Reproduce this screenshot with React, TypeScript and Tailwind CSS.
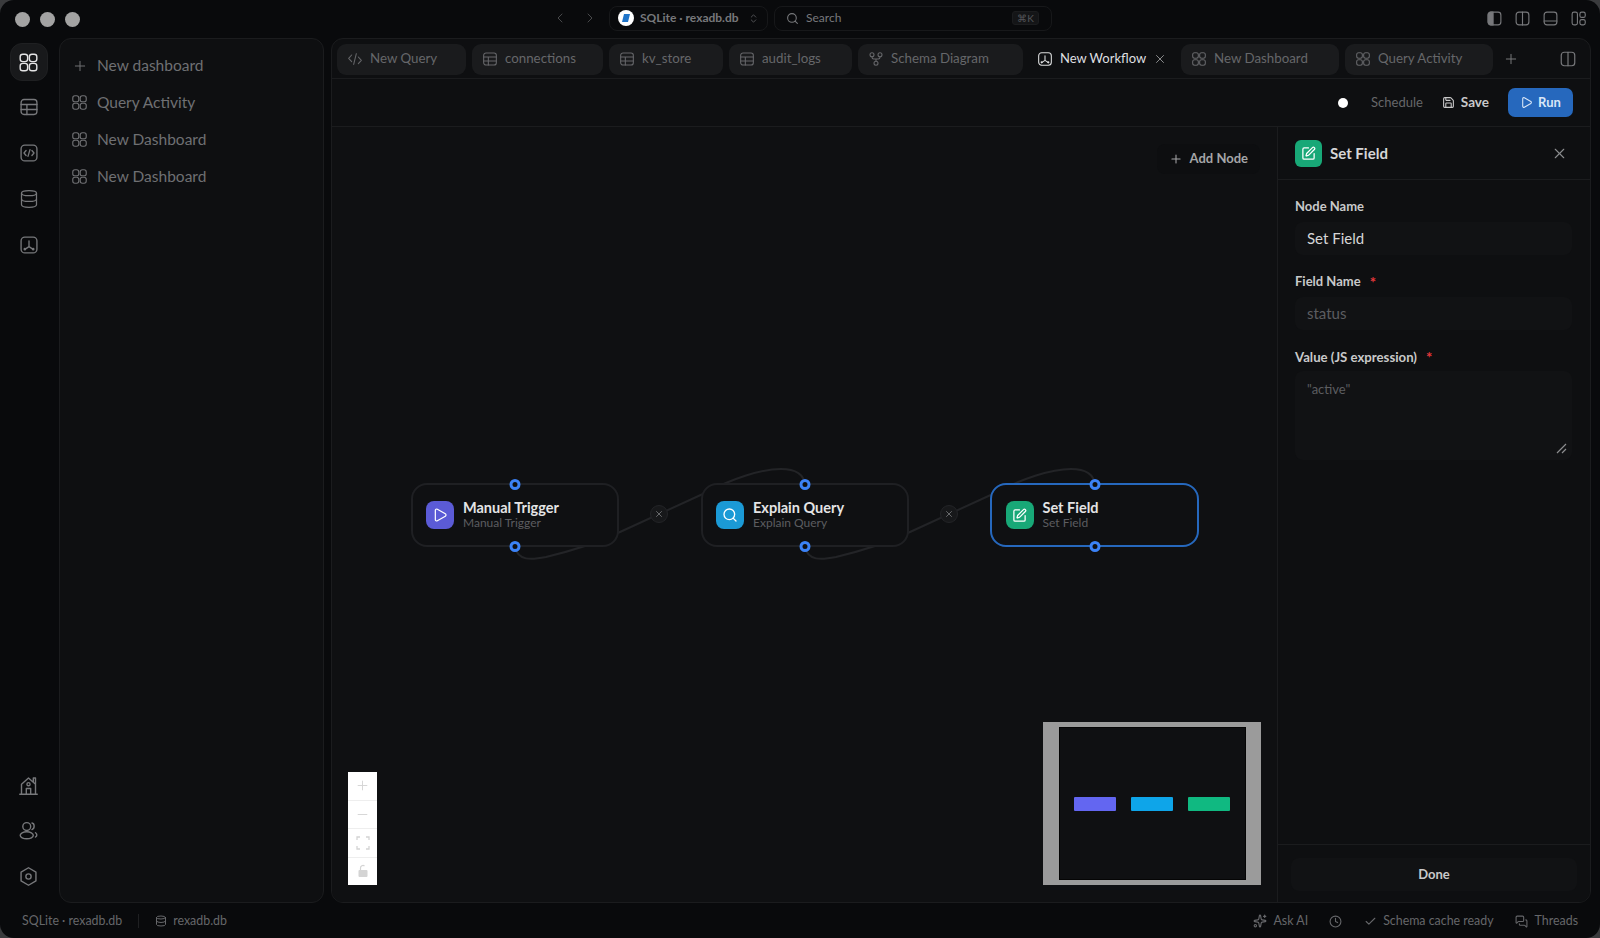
import React from "react";
import { Plus, X, ChevronLeft, ChevronRight, ChevronsUpDown, Search, Play, Save, SquarePen, Minus, Check, Clock, Database, Sparkles, MessagesSquare } from "lucide-react";

type P = { s?: number; c?: string };
const Svg = ({ s = 20, c = "", children }: P & { children: React.ReactNode }) => (
  <svg width={s} height={s} viewBox="0 0 24 24" fill="none" stroke="currentColor" strokeWidth={1.6} strokeLinecap="round" strokeLinejoin="round" className={c}>
    {children}
  </svg>
);
const GridI = (p: P) => (
  <Svg {...p}>
    <rect x="2.5" y="2.5" width="8.5" height="8.5" rx="3" />
    <rect x="13" y="2.5" width="8.5" height="8.5" rx="3" />
    <rect x="2.5" y="13" width="8.5" height="8.5" rx="3" />
    <rect x="13" y="13" width="8.5" height="8.5" rx="3" />
  </Svg>
);
const TableI = (p: P) => (
  <Svg {...p}>
    <rect x="2.5" y="3" width="19" height="18" rx="3.5" />
    <path d="M2.5 9h19M2.5 15h19M9.5 9v12" />
  </Svg>
);
const CodeBoxI = (p: P) => (
  <Svg {...p}>
    <rect x="2.5" y="2.5" width="19" height="19" rx="4.5" />
    <path d="M8.5 9 6 12l2.5 3M15.5 9 18 12l-2.5 3M13.2 8l-2.4 8" />
  </Svg>
);
const CodeI = (p: P) => (
  <Svg {...p}>
    <path d="M7 6 2.5 11 7 16M17 9l4.5 5-4.5 5M14 4l-4 16" />
  </Svg>
);
const FlowI = (p: P) => (
  <Svg {...p}>
    <rect x="2.5" y="2.5" width="19" height="19" rx="4.5" />
    <path d="M12 7v7M12 14l-4.5 3M12 14l4.5 3" />
    <circle cx="7" cy="17" r=".8" fill="currentColor" />
    <circle cx="17" cy="17" r=".8" fill="currentColor" />
  </Svg>
);
const SchemaI = (p: P) => (
  <Svg {...p}>
    <circle cx="6" cy="5.5" r="3" />
    <circle cx="18" cy="5.5" r="3" />
    <circle cx="12" cy="18.5" r="3" />
    <path d="M6 8.5v1c0 1.5 1 2.500 2.500 2.500h7c1.500 0 2.500-1 2.500-2.500v-1M12 12v3.500" />
  </Svg>
);
const HomeI = (p: P) => (
  <Svg {...p}>
    <path d="M2 22h20M4 22V10.500L12 3.500l8 7V22M17.500 8V3.500h2.500v6.500M9.500 22v-6.500h5V22" />
    <circle cx="12" cy="10.500" r="1.800" />
  </Svg>
);
const UsersI = (p: P) => (
  <Svg {...p}>
    <circle cx="10" cy="7.500" r="4.500" />
    <ellipse cx="10" cy="17.500" rx="7.500" ry="4" />
    <path d="M16 3.500c3 .5 3.500 6 0 7.500M20 14.500c2 1.500 2 3.500 0 5" />
  </Svg>
);
const GearI = (p: P) => (
  <Svg {...p}>
    <path d="M12 2 20.500 7v10L12 22l-8.500-5V7z" />
    <circle cx="12" cy="12" r="3" />
  </Svg>
);
const PanelI = ({ kind, s = 17 }: { kind: "left" | "mid" | "bottom"; s?: number }) => (
  <Svg s={s}>
    <rect x="3" y="3" width="18" height="18" rx="4" />
    {kind === "left" && <path d="M3 7a4 4 0 0 1 4-4h3v18H7a4 4 0 0 1-4-4z" fill="currentColor" />}
    {kind === "mid" && <path d="M12 3v18" />}
    {kind === "bottom" && <path d="M3 15.500h18" />}
  </Svg>
);
const DashI = ({ s = 17 }: P) => (
  <Svg s={s}>
    <rect x="3" y="3" width="7.500" height="18" rx="2.500" />
    <rect x="14" y="3" width="7.500" height="7.500" rx="2.500" />
    <rect x="14" y="13.500" width="7.500" height="7.500" rx="2.500" />
  </Svg>
);

const tabs: { n: string; I: (p: P) => React.ReactElement; w: string; active?: boolean }[] = [
  { n: "New Query", I: CodeI, w: "w-[129px]" },
  { n: "connections", I: TableI, w: "w-[131px]" },
  { n: "kv_store", I: TableI, w: "w-[114px]" },
  { n: "audit_logs", I: TableI, w: "w-[123px]" },
  { n: "Schema Diagram", I: SchemaI, w: "w-[165px]" },
  { n: "New Workflow", I: FlowI, w: "w-[146px]", active: true },
  { n: "New Dashboard", I: GridI, w: "w-[158px]" },
  { n: "Query Activity", I: GridI, w: "w-[148px]" },
];

const Handle = ({ pos }: { pos: string }) => (
  <span className={`absolute left-1/2 -translate-x-1/2 ${pos} w-[11px] h-[11px] rounded-full bg-[#0f1012] border-[3px] border-[#3b82f6]`} />
);

const Node = ({ title, tone, pos, selected, I }: { title: string; tone: string; pos: string; selected?: boolean; I: React.ReactNode }) => (
  <div className={`absolute top-[356px] h-[64px] rounded-[16px] bg-[#0f1012] flex items-center gap-[9px] ${pos} ${selected ? "pl-[13.500px] border-[2.500px] border-[#2668bd]" : "pl-[13px] border-2 border-[#1f2023]"}`}>
    <div className={`w-[28px] h-[28px] rounded-[8px] flex items-center justify-center text-white ${tone}`}>{I}</div>
    <div className="flex flex-col pb-[1px]">
      <span className="text-[14.500px] leading-[16px] font-bold text-[#e4e4e5]">{title}</span>
      <span className="text-[12px] leading-[13px] text-[#5c5d60]">{title}</span>
    </div>
    <Handle pos="-top-[6.500px]" />
    <Handle pos="-bottom-[6.500px]" />
  </div>
);

const EdgeX = ({ pos }: { pos: string }) => (
  <div className={`absolute top-[378px] ${pos} w-[18px] h-[18px] rounded-full bg-[#17181a] border border-[#232427] flex items-center justify-center text-[#77787b]`}>
    <X size={10} />
  </div>
);

const Field = ({ label, req, value, dim }: { label: string; req?: boolean; value: string; dim?: boolean }) => (
  <div className="flex flex-col">
    <div className="h-[20px] flex items-center gap-[9px] text-[13px] font-bold text-[#c9c9ca]">
      {label}
      {req && <span className="text-[#e5383b] text-[15px]">*</span>}
    </div>
    <div className={`mt-[5px] h-[33px] rounded-[8px] bg-[#111214] flex items-center px-[12px] text-[15px] ${dim ? "text-[#5c5d60]" : "text-[#d6d6d7]"}`}>{value}</div>
  </div>
);

export default function App() {
  return (
    <div className="w-[1600px] h-[938px] bg-[#3a3b3d] overflow-hidden" style={{ fontFamily: "Lato, 'Noto Sans', sans-serif" }}>
      <div className="h-full rounded-[14px] bg-[#090a0c] flex flex-col">
        {/* title bar */}
        <div className="h-[38px] shrink-0 flex items-center pb-[2px]">
          <div className="flex items-center gap-[10px] pl-[15px] pt-[2px]">
            <span className="w-[15px] h-[15px] rounded-full bg-[#a3a3a3]" />
            <span className="w-[15px] h-[15px] rounded-full bg-[#a3a3a3]" />
            <span className="w-[15px] h-[15px] rounded-full bg-[#a3a3a3]" />
          </div>
          <div className="ml-[472px] flex items-center gap-[14px] text-[#48494b]">
            <ChevronLeft size={16} strokeWidth={1.5} />
            <ChevronRight size={16} strokeWidth={1.5} />
          </div>
          <div className="ml-[11px] h-[25px] w-[159px] rounded-[8px] border border-[#17181a] flex items-center pl-[8px] gap-[6px] text-[12px] font-bold text-[#77787b]">
            <span className="w-[16px] h-[16px] rounded-full bg-white flex items-center justify-center shrink-0">
              <svg width="10" height="10" viewBox="0 0 10 10"><path d="M3 1h6L7 9H1z" fill="#1f74c9" /></svg>
            </span>
            SQLite · rexadb.db
            <ChevronsUpDown size={11} className="text-[#55565a] ml-[3px]" />
          </div>
          <div className="ml-[6px] h-[25px] w-[278px] rounded-[8px] border border-[#17181a] flex items-center pl-[11px] pr-[12px] gap-[7px] text-[12px] text-[#77787b]">
            <Search size={13} />
            Search
            <span className="ml-auto h-[14px] px-[4px] rounded-[3px] bg-[#141517] border border-[#1b1c1e] text-[10px] leading-[12px] text-[#55565a]">⌘K</span>
          </div>
          <div className="ml-auto mr-[13px] flex items-center gap-[11px] text-[#77787b]">
            <PanelI kind="left" />
            <PanelI kind="mid" />
            <PanelI kind="bottom" />
            <DashI />
          </div>
        </div>

        {/* body */}
        <div className="flex-1 min-h-0 flex">
          {/* rail */}
          <div className="w-[59px] shrink-0 flex flex-col items-center pt-[5px] pb-[8px] pr-[2px] text-[#77787b]">
            <div className="w-[38px] h-[38px] rounded-[12px] bg-[#18191b] border border-[#1f2022] flex items-center justify-center text-[#e4e4e5]"><GridI s={21} /></div>
            <div className="mt-[7px] h-[38px] flex items-center"><TableI s={20} /></div>
            <div className="mt-[8px] h-[38px] flex items-center"><CodeBoxI s={20} /></div>
            <div className="mt-[8px] h-[38px] flex items-center"><Database size={20} strokeWidth={1.5} /></div>
            <div className="mt-[8px] h-[38px] flex items-center"><FlowI s={20} /></div>
            <div className="mt-auto h-[38px] flex items-center"><HomeI s={21} /></div>
            <div className="mt-[7px] h-[38px] flex items-center"><UsersI s={21} /></div>
            <div className="mt-[8px] h-[38px] flex items-center"><GearI s={21} /></div>
          </div>

          {/* left panel */}
          <div className="w-[265px] shrink-0 rounded-[12px] border border-[#1b1c1e] bg-[#0e0f11] pt-[8px] pl-[11px] pr-[12px] text-[15.500px] text-[#6f7073]">
            <div className="h-[37px] flex items-center gap-[9px]"><Plus size={16} strokeWidth={1.5} className="mx-[0.500px]" /><span>New dashboard</span></div>
            <div className="h-[37px] flex items-center gap-[9px]"><GridI s={17} /><span>Query Activity</span></div>
            <div className="h-[37px] flex items-center gap-[9px]"><GridI s={17} /><span>New Dashboard</span></div>
            <div className="h-[37px] flex items-center gap-[9px]"><GridI s={17} /><span>New Dashboard</span></div>
          </div>

          {/* main panel */}
          <div className="ml-[7px] mr-[9px] flex-1 min-w-0 rounded-[12px] border border-[#1b1c1e] bg-[#0e0f11] flex flex-col overflow-hidden">
            <div className="h-[40px] shrink-0 border-b border-[#1b1c1e] flex items-center pl-[5px] gap-[6px] pt-[1px]">
              {tabs.map((t) => (
                <div key={t.n} className={`${t.w} h-[31px] shrink-0 rounded-[9px] flex items-center gap-[7px] whitespace-nowrap ${t.active ? "pl-[8px] text-[13px] text-[#dedfe0]" : "pl-[10px] text-[13.300px] bg-[#1a1b1d] text-[#66676a]"}`}>
                  <t.I s={16} c="shrink-0" />
                  <span>{t.n}</span>
                  {t.active && <X size={14} strokeWidth={1.5} className="ml-auto mr-[9px] shrink-0 text-[#9a9b9d]" />}
                </div>
              ))}
              <Plus size={16} strokeWidth={1.5} className="ml-[4px] text-[#77787b]" />
              <span className="ml-[34px] text-[#77787b]"><PanelI kind="mid" s={18} /></span>
            </div>
            <div className="h-[48px] shrink-0 border-b border-[#1b1c1e] flex items-center pr-[17px]">
              <span className="ml-auto w-[10px] h-[10px] rounded-full bg-white" />
              <span className="ml-[23px] text-[13px] text-[#66676a]">Schedule</span>
              <div className="ml-[19px] flex items-center gap-[6px] text-[13.500px] font-bold text-[#c9c9ca]"><Save size={13} />Save</div>
              <div className="ml-[19px] w-[65px] h-[29px] rounded-[7px] bg-[#2668bd] flex items-center justify-center gap-[5px] text-[13px] font-bold text-[#d8e6f7]"><Play size={13} />Run</div>
            </div>
            <div className="flex-1 min-h-0 flex">
              {/* canvas */}
              <div className="flex-1 min-w-0 relative bg-[#0f1012]">
                <svg className="absolute inset-0" width="945" height="776" viewBox="0 0 945 776" fill="none" stroke="#232427" strokeWidth="2">
                  <path d="M183 420 C186 434 199 433 214 430 C239 424 269 414 288 405 L373 366 C399 352 429 342 449 342 C464 342 472 348 473 358" />
                  <path d="M473 420 C476 434 489 433 504 430 C529 424 559 414 578 405 L663 366 C689 352 719 342 739 342 C754 342 762 348 763 358" />
                </svg>
                <Node title="Manual Trigger" tone="bg-[#5b5bd6]" pos="left-[79px] w-[208px]" I={<Play size={16} strokeWidth={1.8} />} />
                <Node title="Explain Query" tone="bg-[#1b9ad6]" pos="left-[369px] w-[208px]" I={<Search size={16} strokeWidth={2} />} />
                <Node title="Set Field" tone="bg-[#18a877]" pos="left-[658px] w-[209px]" selected I={<SquarePen size={15} strokeWidth={2} />} />
                <EdgeX pos="left-[318px]" />
                <EdgeX pos="left-[608px]" />
                <div className="absolute top-[17px] right-[17px] h-[30px] flex items-center gap-[7px] px-[12px] rounded-[8px] bg-[#0d0e10] text-[13px] font-bold text-[#a5a6a8]"><Plus size={14} strokeWidth={1.8} />Add Node</div>
                {/* flow controls */}
                <div className="absolute left-[16px] bottom-[17px] w-[29px] h-[113px] bg-white flex flex-col text-[#d4d4d4]">
                  <div className="flex-1 flex items-center justify-center border-b border-[#eeeeee]"><Plus size={15} strokeWidth={1.5} /></div>
                  <div className="flex-1 flex items-center justify-center border-b border-[#eeeeee]"><Minus size={15} strokeWidth={1.5} /></div>
                  <div className="flex-1 flex items-center justify-center border-b border-[#eeeeee]">
                    <svg width="14" height="14" viewBox="0 0 14 14" fill="none" stroke="currentColor" strokeWidth="1.300"><path d="M1 4V1h3M10 1h3v3M13 10v3h-3M4 13H1v-3" /></svg>
                  </div>
                  <div className="flex-1 flex items-center justify-center">
                    <svg width="14" height="14" viewBox="0 0 14 14" fill="#d4d4d4"><rect x="2.500" y="6" width="9" height="7" rx="1" /><path d="M4.500 6V4a2.500 2.500 0 0 1 4-2" fill="none" stroke="currentColor" strokeWidth="1.200" /></svg>
                  </div>
                </div>
                {/* minimap */}
                <div className="absolute right-[16px] bottom-[17px] w-[218px] h-[163px] bg-[#9b9b9b] flex items-center justify-center">
                  <div className="w-[187px] h-[153px] bg-[#0f1012] border border-[#050505] flex items-center justify-center gap-[15px]">
                    <span className="w-[42px] h-[14px] rounded-[1px] bg-[#6366f1]" />
                    <span className="w-[42px] h-[14px] rounded-[1px] bg-[#0ea5e9]" />
                    <span className="w-[42px] h-[14px] rounded-[1px] bg-[#10b981]" />
                  </div>
                </div>
              </div>

              {/* inspector */}
              <div className="w-[313px] shrink-0 border-l border-[#1b1c1e] flex flex-col bg-[#0e0f11]">
                <div className="h-[53px] shrink-0 border-b border-[#1b1c1e] flex items-center pl-[17px] pr-[22px] gap-[8px]">
                  <div className="w-[27px] h-[27px] rounded-[6px] bg-[#18a877] flex items-center justify-center text-white"><SquarePen size={15} strokeWidth={2} /></div>
                  <span className="text-[15px] font-bold text-[#d6d6d7]">Set Field</span>
                  <X size={17} strokeWidth={1.5} className="ml-auto text-[#8c8d8f]" />
                </div>
                <div className="flex-1 pl-[17px] pr-[18px] pt-[17px] flex flex-col gap-[17px]">
                  <Field label="Node Name" value="Set Field" />
                  <Field label="Field Name" req value="status" dim />
                  <div className="flex flex-col">
                    <div className="h-[21px] flex items-center gap-[9px] text-[13.200px] font-bold text-[#c9c9ca]">Value (JS expression)<span className="text-[#e5383b] text-[15px]">*</span></div>
                    <div className="mt-[3px] h-[89px] rounded-[8px] bg-[#111214] px-[12px] pt-[9px] text-[13px] text-[#5c5d60] relative">
                      "active"
                      <svg className="absolute right-[5px] bottom-[6px]" width="11" height="11" viewBox="0 0 11 11" stroke="#8c8d8f" strokeWidth="1.200"><path d="M1 10 10 1M6 10l4-4" /></svg>
                    </div>
                  </div>
                </div>
                <div className="h-[58px] shrink-0 border-t border-[#1b1c1e] flex items-center px-[13px] pt-[2px]">
                  <div className="w-full h-[33px] rounded-[8px] bg-[#111214] flex items-center justify-center text-[13px] font-bold text-[#c9c9ca]">Done</div>
                </div>
              </div>
            </div>
          </div>
        </div>

        {/* status bar */}
        <div className="h-[35px] shrink-0 flex items-center px-[22px] pt-[1px] text-[12.400px] text-[#66676a]">
          <span>SQLite · rexadb.db</span>
          <span className="ml-[16px] w-px h-[14px] bg-[#1f2022]" />
          <Database size={12} className="ml-[16px]" />
          <span className="ml-[6px]">rexadb.db</span>
          <Sparkles size={14} className="ml-auto" />
          <span className="ml-[6px]">Ask AI</span>
          <Clock size={13} className="ml-[21px]" />
          <Check size={13} className="ml-[22px]" />
          <span className="ml-[6px]">Schema cache ready</span>
          <MessagesSquare size={13} className="ml-[21px]" />
          <span className="ml-[7px]">Threads</span>
        </div>
      </div>
    </div>
  );
}
